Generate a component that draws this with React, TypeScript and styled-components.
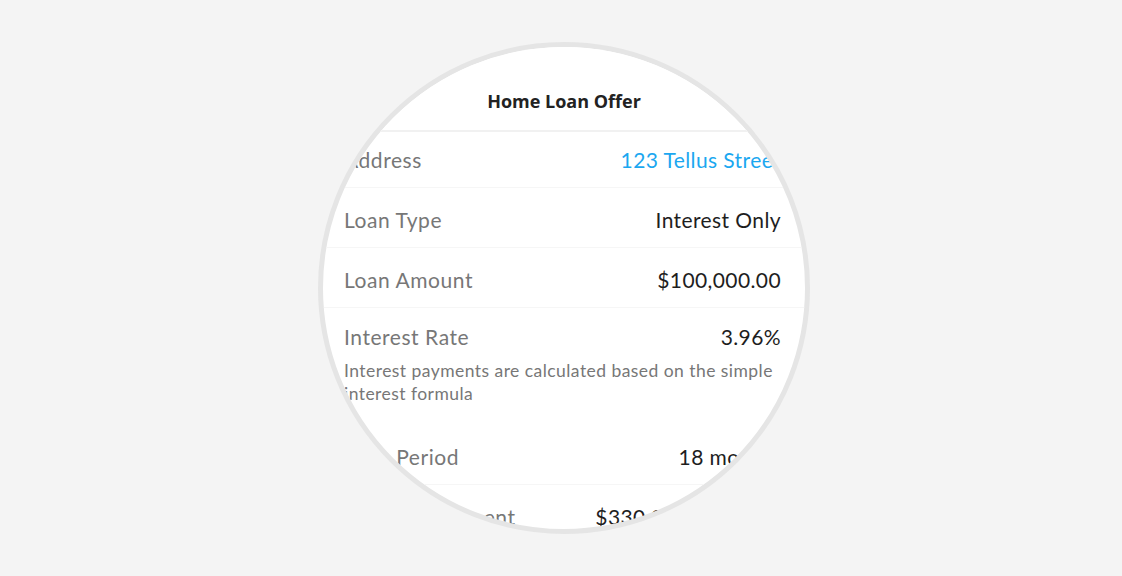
import React from "react";
import styled, { createGlobalStyle } from "styled-components";

const GlobalStyle = createGlobalStyle`
  html, body {
    margin: 0;
    padding: 0;
    background: #f4f4f4;
  }
  body {
    font-family: "Lato", "Noto Sans", sans-serif;
  }
`;

const Stage = styled.div`
  width: 1122px;
  height: 576px;
  display: flex;
  align-items: center;
  justify-content: center;
  padding-left: 6px;
  box-sizing: border-box;
`;

const Lens = styled.div`
  width: 492px;
  height: 492px;
  box-sizing: border-box;
  border: 5px solid #e5e5e5;
  border-radius: 50%;
  overflow: hidden;
  background: #ffffff;
`;

const Screen = styled.div`
  display: flex;
  flex-direction: column;
  width: 100%;
`;

const Header = styled.div`
  position: relative;
  z-index: 1;
  height: 85px;
  display: flex;
  align-items: flex-end;
  justify-content: center;
  padding-bottom: 17px;
  box-sizing: border-box;
  background: #ffffff;
  border-bottom: 2px solid #f1f1f1;
`;

const Title = styled.h1`
  margin: 0;
  font-family: "Open Sans", sans-serif;
  font-weight: 700;
  font-size: 18px;
  line-height: 24px;
  color: #222222;
`;

const List = styled.div`
  display: flex;
  flex-direction: column;
  margin-top: -4px;
`;

const Row = styled.div<{ $withNote?: boolean }>`
  display: flex;
  flex-direction: column;
  padding: ${(p) => (p.$withNote ? "16px" : "19px")} 24px 0 21px;
  min-height: 60px;
  box-sizing: border-box;
  border-bottom: 1px solid ${(p) => (p.$withNote ? "transparent" : "#f6f6f6")};
`;

const Line = styled.div`
  display: flex;
  justify-content: space-between;
  align-items: baseline;
  white-space: nowrap;
`;

const Label = styled.span`
  font-size: 21px;
  line-height: 26px;
  letter-spacing: 0.55px;
  color: #777777;
`;

const Value = styled.span<{ $link?: boolean }>`
  font-size: 21px;
  line-height: 26px;
  letter-spacing: 0.4px;
  color: ${(p) => (p.$link ? "#1ba7f0" : "#1e1e1e")};
`;

const Note = styled.p`
  margin: 9px 0 19px;
  font-size: 17.5px;
  line-height: 23px;
  letter-spacing: 0.45px;
  color: #777777;
`;

type Item = { label: string; value: string; link?: boolean; note?: string };

const items: Item[] = [
  { label: "Address", value: "123 Tellus Street", link: true },
  { label: "Loan Type", value: "Interest Only" },
  { label: "Loan Amount", value: "$100,000.00" },
  {
    label: "Interest Rate",
    value: "3.96%",
    note: "Interest payments are calculated based on the simple interest formula",
  },
  { label: "Loan Period", value: "18 months" },
  { label: "Monthly Payment", value: "$330.00 per month" },
];

export default function App() {
  return (
    <>
      <GlobalStyle />
      <Stage>
        <Lens>
          <Screen>
            <Header>
              <Title>Home Loan Offer</Title>
            </Header>
            <List>
              {items.map((it) => (
                <Row key={it.label} $withNote={!!it.note}>
                  <Line>
                    <Label>{it.label}</Label>
                    <Value $link={it.link}>{it.value}</Value>
                  </Line>
                  {it.note && <Note>{it.note}</Note>}
                </Row>
              ))}
            </List>
          </Screen>
        </Lens>
      </Stage>
    </>
  );
}
